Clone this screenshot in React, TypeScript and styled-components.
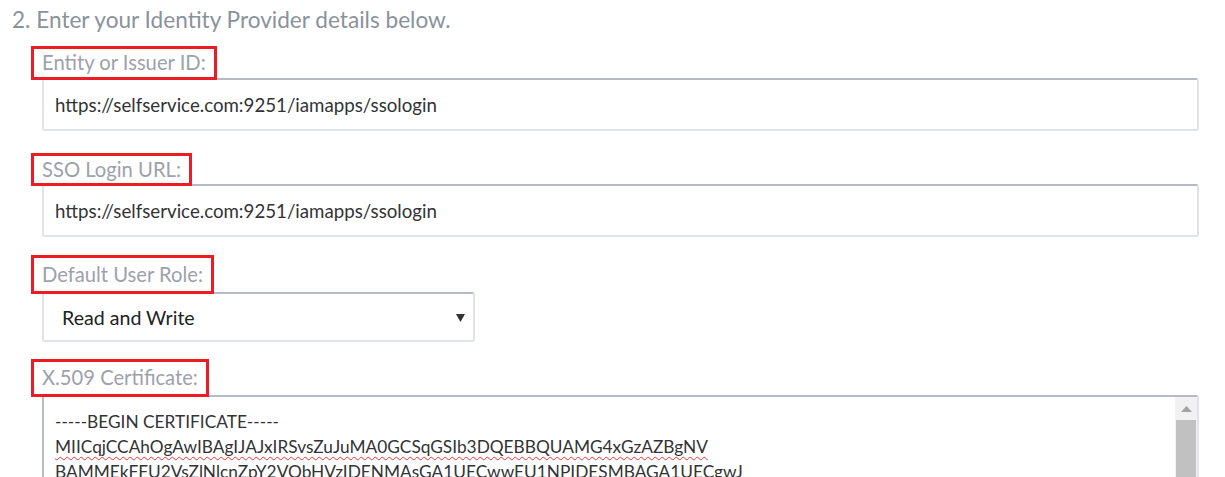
import React from "react"
import styled, { createGlobalStyle } from "styled-components"

const GlobalStyle = createGlobalStyle`
  html, body {
    margin: 0;
    padding: 0;
    background: #fff;
  }
  body {
    font-family: Lato, "Open Sans", sans-serif;
    overflow: hidden;
  }
`

const Page = styled.div`
  padding: 7px 26px 0 12px;
`

const StepTitle = styled.h2`
  margin: 0 0 13px 0;
  font-size: 22.6px;
  font-weight: 400;
  line-height: 26px;
  color: #8a929b;
`

const Form = styled.div`
  padding-left: 30px;
  display: flex;
  flex-direction: column;
`

const Field = styled.div<{ $space?: number }>`
  display: flex;
  flex-direction: column;
  align-items: flex-start;
  margin-top: ${({ $space = 0 }) => $space}px;
`

const Label = styled.label<{ $h?: number }>`
  position: relative;
  z-index: 1;
  box-sizing: border-box;
  display: flex;
  align-items: center;
  height: ${({ $h = 34 }) => $h}px;
  margin: 0 0 -2px -11px;
  padding: 0 8px 1px 8px;
  border: 3px solid #ed1c24;
  font-size: 20.2px;
  line-height: 25px;
  color: #9ca2aa;
`

const fieldBox = `
  box-sizing: border-box;
  border: 2px solid #e0e3e9;
  border-top-color: #b6bac8;
  border-radius: 3px;
  background: #fff;
  color: #333;
`

const TextInput = styled.input`
  ${fieldBox}
  width: 100%;
  height: 53px;
  padding: 0 11px;
  font-family: inherit;
  font-size: 18.7px;
  outline: none;
`

const SelectWrap = styled.div`
  position: relative;
  width: 433px;
`

const Select = styled.select`
  ${fieldBox}
  appearance: none;
  width: 100%;
  height: 50px;
  padding: 0 18px;
  font-family: inherit;
  font-size: 19.6px;
  color: #222;
  outline: none;
`

const Caret = styled.svg`
  position: absolute;
  right: 10px;
  top: 21px;
  pointer-events: none;
`

const CertBox = styled.div`
  ${fieldBox}
  border-left-color: #b9bdc6;
  width: 100%;
  height: 86px;
  display: flex;
  overflow: hidden;
  border-bottom: none;
  border-radius: 3px 3px 0 0;
`

const CertText = styled.div`
  flex: 1;
  padding: 12px 12px 0 11px;
  font-size: 17.3px;
  line-height: 25px;
  color: #333;
  white-space: nowrap;
  overflow: hidden;
`

const CertLine = styled.div<{ $misspelled?: boolean }>`
  text-decoration: ${({ $misspelled }) => ($misspelled ? "underline wavy #e33" : "none")};
  text-decoration-thickness: 1px;
  text-underline-offset: 3px;
`

const Scrollbar = styled.div`
  width: 22px;
  background: #f1f1f1;
  display: flex;
  flex-direction: column;
  align-items: stretch;
`

const ScrollButton = styled.div`
  height: 23px;
  display: flex;
  align-items: center;
  justify-content: center;
`

const Thumb = styled.div`
  flex: 1;
  margin: 0 1px;
  background: #c1c1c1;
`

const certLines = [
  { text: "-----BEGIN CERTIFICATE-----" },
  { text: "MIICqjCCAhOgAwIBAgIJAJxIRSvsZuJuMA0GCSqGSIb3DQEBBQUAMG4xGzAZBgNV", misspelled: true },
  { text: "BAMMEkFFU2VsZlNlcnZpY2VObHVzIDENMAsGA1UECwwEU1NPIDESMBAGA1UECgwJ", misspelled: true },
]

const ssoUrl = "https://selfservice.com:9251/iamapps/ssologin"

export default function App() {
  return (
    <>
      <GlobalStyle />
      <Page>
        <StepTitle>2. Enter your Identity Provider details below.</StepTitle>
        <Form>
          <Field>
            <Label $h={34}>Entity or Issuer ID:</Label>
            <TextInput readOnly value={ssoUrl} />
          </Field>
          <Field $space={22}>
            <Label $h={33}>SSO Login URL:</Label>
            <TextInput readOnly value={ssoUrl} />
          </Field>
          <Field $space={18}>
            <Label $h={39}>Default User Role:</Label>
            <SelectWrap>
              <Select defaultValue="rw">
                <option value="rw">Read and Write</option>
                <option value="r">Read Only</option>
              </Select>
              <Caret width="9" height="9" viewBox="0 0 9 9">
                <path d="M0 1h9L4.5 9z" fill="#333" />
              </Caret>
            </SelectWrap>
          </Field>
          <Field $space={17}>
            <Label $h={38}>X.509 Certificate:</Label>
            <CertBox>
              <CertText>
                {certLines.map((l, i) => (
                  <CertLine key={i} $misspelled={l.misspelled}>
                    {l.text}
                  </CertLine>
                ))}
              </CertText>
              <Scrollbar>
                <ScrollButton>
                  <svg width="11" height="6" viewBox="0 0 11 6">
                    <path d="M0 6L5.5 0L11 6z" fill="#a3a3a3" />
                  </svg>
                </ScrollButton>
                <Thumb />
              </Scrollbar>
            </CertBox>
          </Field>
        </Form>
      </Page>
    </>
  )
}
